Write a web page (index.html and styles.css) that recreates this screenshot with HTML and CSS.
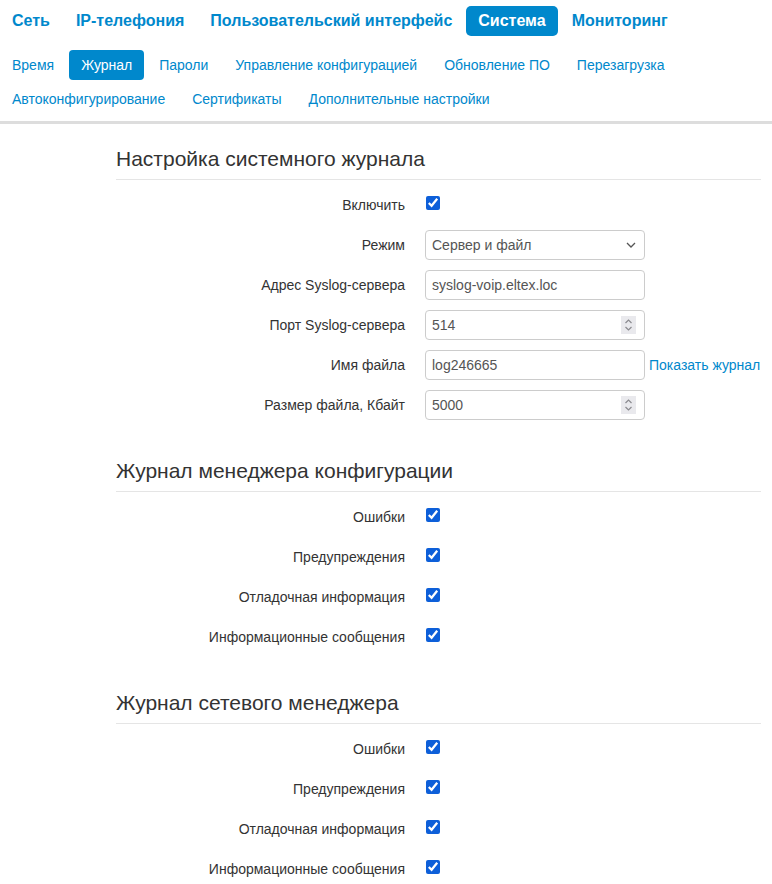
FILE: index.html
```html
<!DOCTYPE html>
<html lang="ru">
<head>
<meta charset="utf-8">
<title>Журнал</title>
<link rel="stylesheet" href="styles.css">
</head>
<body>
<header class="header">
  <nav class="mainnav">
    <a class="mainnav-item" href="#">Сеть</a>
    <a class="mainnav-item" href="#">IP-телефония</a>
    <a class="mainnav-item" href="#">Пользовательский интерфейс</a>
    <a class="mainnav-item active" href="#">Система</a>
    <a class="mainnav-item" href="#">Мониторинг</a>
  </nav>
  <nav class="subnav">
    <a class="subnav-item" href="#">Время</a>
    <a class="subnav-item active" href="#">Журнал</a>
    <a class="subnav-item" href="#">Пароли</a>
    <a class="subnav-item" href="#">Управление конфигурацией</a>
    <a class="subnav-item" href="#">Обновление ПО</a>
    <a class="subnav-item" href="#">Перезагрузка</a>
    <a class="subnav-item" href="#">Автоконфигурирование</a>
    <a class="subnav-item" href="#">Сертификаты</a>
    <a class="subnav-item" href="#">Дополнительные настройки</a>
  </nav>
</header>

<main class="content">
  <section class="fieldset">
    <h2 class="legend">Настройка системного журнала</h2>
    <div class="row">
      <label class="label">Включить</label>
      <div class="controls"><input class="check" type="checkbox" checked></div>
    </div>
    <div class="row">
      <label class="label">Режим</label>
      <div class="controls">
        <div class="select-wrap">
          <select class="field select"><option>Сервер и файл</option></select>
          <svg class="select-arrow" width="10" height="6" viewBox="0 0 10 6"><path d="M1 1 L5 5 L9 1" fill="none" stroke="#555" stroke-width="1.3"/></svg>
        </div>
      </div>
    </div>
    <div class="row">
      <label class="label">Адрес Syslog-сервера</label>
      <div class="controls"><input class="field" type="text" value="syslog-voip.eltex.loc"></div>
    </div>
    <div class="row">
      <label class="label">Порт Syslog-сервера</label>
      <div class="controls">
        <div class="spin-wrap">
          <input class="field" type="text" value="514">
          <span class="spinner"><svg width="15" height="16" viewBox="0 0 15 16"><path d="M4.5 6 L7.5 3 L10.5 6" fill="none" stroke="#8a8a8f" stroke-width="1.2"/><path d="M4.5 10 L7.5 13 L10.5 10" fill="none" stroke="#8a8a8f" stroke-width="1.2"/></svg></span>
        </div>
      </div>
    </div>
    <div class="row">
      <label class="label">Имя файла</label>
      <div class="controls"><input class="field" type="text" value="log246665"><a class="link" href="#">Показать журнал</a></div>
    </div>
    <div class="row">
      <label class="label">Размер файла, Кбайт</label>
      <div class="controls">
        <div class="spin-wrap">
          <input class="field" type="text" value="5000">
          <span class="spinner"><svg width="15" height="16" viewBox="0 0 15 16"><path d="M4.5 6 L7.5 3 L10.5 6" fill="none" stroke="#8a8a8f" stroke-width="1.2"/><path d="M4.5 10 L7.5 13 L10.5 10" fill="none" stroke="#8a8a8f" stroke-width="1.2"/></svg></span>
        </div>
      </div>
    </div>
  </section>

  <section class="fieldset">
    <h2 class="legend">Журнал менеджера конфигурации</h2>
    <div class="row"><label class="label">Ошибки</label><div class="controls"><input class="check" type="checkbox" checked></div></div>
    <div class="row"><label class="label">Предупреждения</label><div class="controls"><input class="check" type="checkbox" checked></div></div>
    <div class="row"><label class="label">Отладочная информация</label><div class="controls"><input class="check" type="checkbox" checked></div></div>
    <div class="row"><label class="label">Информационные сообщения</label><div class="controls"><input class="check" type="checkbox" checked></div></div>
  </section>

  <section class="fieldset">
    <h2 class="legend">Журнал сетевого менеджера</h2>
    <div class="row"><label class="label">Ошибки</label><div class="controls"><input class="check" type="checkbox" checked></div></div>
    <div class="row"><label class="label">Предупреждения</label><div class="controls"><input class="check" type="checkbox" checked></div></div>
    <div class="row"><label class="label">Отладочная информация</label><div class="controls"><input class="check" type="checkbox" checked></div></div>
    <div class="row"><label class="label">Информационные сообщения</label><div class="controls"><input class="check" type="checkbox" checked></div></div>
  </section>
</main>
</body>
</html>
```

FILE: styles.css
```css
* { box-sizing: border-box; }

html, body {
  margin: 0;
  padding: 0;
  background: #fff;
  font-family: "Liberation Sans", Arial, sans-serif;
  color: #333;
}

a { text-decoration: none; }

.header {
  padding-top: 6px;
  border-bottom: 3px solid #ddd;
  padding-bottom: 7px;
}

.mainnav {
  display: flex;
  gap: 2px;
}

.mainnav-item {
  display: block;
  padding: 5px 12px;
  line-height: 20px;
  font-size: 16px;
  font-weight: bold;
  color: #0088cc;
  border-radius: 5px;
}

.mainnav-item.active {
  background: #0088cc;
  color: #fff;
}

.subnav {
  display: flex;
  flex-wrap: wrap;
  column-gap: 3px;
  row-gap: 4px;
  margin-top: 14px;
}

.subnav-item {
  display: block;
  padding: 5px 12px;
  line-height: 20px;
  font-size: 14px;
  color: #0088cc;
  border-radius: 4px;
}

.subnav-item.active {
  background: #0088cc;
  color: #fff;
}

.content {
  margin-left: 116px;
  width: 645px;
  padding-top: 15px;
}

.fieldset {
  margin-bottom: 31px;
}

.legend {
  margin: 0 0 10px;
  font-size: 21px;
  font-weight: normal;
  line-height: 40px;
  color: #333;
  border-bottom: 1px solid #e5e5e5;
}

.row {
  display: grid;
  grid-template-columns: 289px 1fr;
  column-gap: 20px;
  height: 30px;
  margin-bottom: 10px;
}

.label {
  text-align: right;
  font-size: 14px;
  line-height: 20px;
  padding-top: 5px;
  color: #333;
}

.controls {
  display: flex;
  align-items: center;
}

.check {
  width: 14px;
  height: 14px;
  margin: 0 0 0 1px;
  align-self: flex-start;
  margin-top: 6px;
  accent-color: #0d5fd9;
}

.field {
  width: 220px;
  height: 30px;
  padding: 4px 6px;
  font-family: "Liberation Sans", Arial, sans-serif;
  font-size: 14px;
  line-height: 20px;
  color: #555;
  background: #fff;
  border: 1px solid #ccc;
  border-radius: 4px;
  outline: none;
}

.select-wrap,
.spin-wrap {
  position: relative;
  width: 220px;
  height: 30px;
}

.select {
  appearance: none;
  -webkit-appearance: none;
  padding-right: 24px;
}

.select-arrow {
  position: absolute;
  right: 9px;
  top: 12px;
  pointer-events: none;
}

.spinner {
  position: absolute;
  right: 9px;
  top: 6px;
  width: 15px;
  height: 18px;
  background: #e9e9ed;
  display: flex;
  align-items: center;
  justify-content: center;
}

.link {
  margin-left: 4px;
  font-size: 14px;
  color: #0088cc;
  white-space: nowrap;
}
```
